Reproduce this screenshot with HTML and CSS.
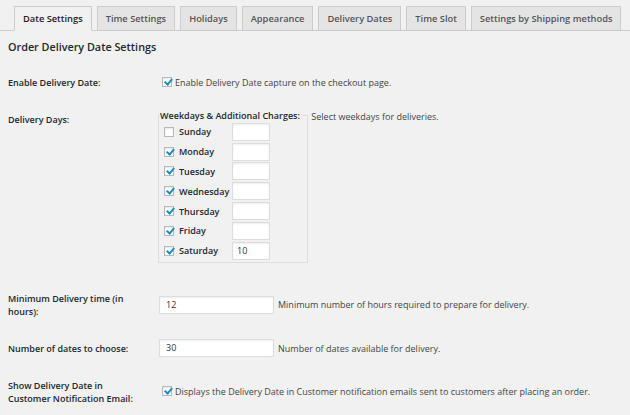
FILE: index.html
```html
<!DOCTYPE html>
<html lang="en">
<head>
  <meta charset="UTF-8" />
  <title>Order Delivery Date Settings</title>
  <link rel="stylesheet" href="styles.css">
</head>
<body>
  <nav class="nav-tab-wrapper">
    <a class="nav-tab nav-tab-active">Date Settings</a>
    <a class="nav-tab">Time Settings</a>
    <a class="nav-tab">Holidays</a>
    <a class="nav-tab">Appearance</a>
    <a class="nav-tab">Delivery Dates</a>
    <a class="nav-tab">Time Slot</a>
    <a class="nav-tab">Settings by Shipping methods</a>
  </nav>

  <h3 class="section-title">Order Delivery Date Settings</h3>

  <table class="form-table">
    <tr>
      <th>Enable Delivery Date:</th>
      <td><label class="check-label"><span class="check on"></span>Enable Delivery Date capture on the checkout page.</label></td>
    </tr>
    <tr class="days-row">
      <th>Delivery Days:</th>
      <td>
        <fieldset class="days">
          <legend>Weekdays &amp; Additional Charges:</legend>
          <div class="day"><span class="check"></span><span class="day-name">Sunday</span><span class="small-input"></span></div>
          <div class="day"><span class="check on"></span><span class="day-name">Monday</span><span class="small-input"></span></div>
          <div class="day"><span class="check on"></span><span class="day-name">Tuesday</span><span class="small-input"></span></div>
          <div class="day"><span class="check on"></span><span class="day-name">Wednesday</span><span class="small-input"></span></div>
          <div class="day"><span class="check on"></span><span class="day-name">Thursday</span><span class="small-input"></span></div>
          <div class="day"><span class="check on"></span><span class="day-name">Friday</span><span class="small-input"></span></div>
          <div class="day"><span class="check on"></span><span class="day-name">Saturday</span><span class="small-input">10</span></div>
        </fieldset>
        <span class="description">Select weekdays for deliveries.</span>
      </td>
    </tr>
    <tr>
      <th>Minimum Delivery time (in hours):</th>
      <td><span class="text-input">12</span><span class="description">Minimum number of hours required to prepare for delivery.</span></td>
    </tr>
    <tr>
      <th>Number of dates to choose:</th>
      <td><span class="text-input">30</span><span class="description">Number of dates available for delivery.</span></td>
    </tr>
    <tr>
      <th>Show Delivery Date in Customer Notification Email:</th>
      <td><label class="check-label"><span class="check on"></span>Displays the Delivery Date in Customer notification emails sent to customers after placing an order.</label></td>
    </tr>
  </table>
</body>
</html>
```

FILE: styles.css
```css
body {
  margin: 0;
  background: #f1f1f1;
  color: #444;
  font-family: "Open Sans", sans-serif;
  font-size: 9px;
  line-height: 13px;
}

.nav-tab-wrapper {
  display: flex;
  gap: 5px;
  padding: 6px 0 0 14px;
  border-bottom: 1px solid #ccc;
}

.nav-tab {
  display: block;
  height: 23px;
  line-height: 23px;
  padding: 0 8px;
  margin-bottom: -1px;
  border: 1px solid #ccc;
  background: #e4e4e4;
  color: #555;
  font-weight: 600;
  font-size: 9.3px;
}

.nav-tab-active {
  background: #f1f1f1;
  border-bottom-color: #f1f1f1;
  color: #222;
}

.section-title {
  margin: 9px 0 0 8px;
  font-size: 10.8px;
  font-weight: 600;
  color: #23282d;
  line-height: 14px;
}

.form-table {
  border-collapse: collapse;
  margin-top: 10px;
}

.form-table th {
  width: 130px;
  padding: 12px 21px 12px 8px;
  text-align: left;
  vertical-align: top;
  font-weight: 600;
  color: #23282d;
}

.form-table td {
  padding: 9px 0;
  vertical-align: middle;
}

.check {
  display: inline-block;
  flex: none;
  box-sizing: border-box;
  width: 10px;
  height: 10px;
  border: 1px solid #b4b9be;
  background: #fff;
  vertical-align: middle;
  position: relative;
  box-shadow: inset 0 1px 2px rgba(0, 0, 0, 0.1);
}

.check.on::after {
  content: "";
  position: absolute;
  left: 3px;
  top: -1px;
  width: 2.5px;
  height: 6px;
  border: solid #1e8cbe;
  border-width: 0 2px 2px 0;
  transform: rotate(40deg);
}

.check-label .check {
  margin: -3px 3px 0 3px;
}

.days-row td {
  vertical-align: top;
  padding-top: 8px;
  padding-bottom: 17px;
}

.days {
  display: inline-block;
  vertical-align: top;
  box-sizing: border-box;
  width: 150px;
  margin: 0 0 0 -1px;
  padding: 0 0 1px 5px;
  border: 1px solid #ddd;
}

.days legend {
  padding: 0 3px 0 0;
  margin-left: -4px;
  font-weight: 600;
  color: #23282d;
}

.day {
  display: flex;
  align-items: center;
  height: 19.8px;
}

.day .check {
  margin-right: 5px;
}

.day-name {
  width: 53px;
  font-weight: 600;
  color: #23282d;
}

.small-input,
.text-input {
  display: inline-block;
  box-sizing: border-box;
  background: #fff;
  border: 1px solid #ddd;
  box-shadow: inset 0 1px 2px rgba(0, 0, 0, 0.07);
  color: #333;
  height: 18px;
  line-height: 16px;
}

.small-input {
  width: 38px;
  padding-left: 4px;
}

.text-input {
  width: 115px;
  vertical-align: middle;
  padding-left: 6px;
}

.description {
  margin-left: 4px;
  vertical-align: middle;
}

.days-row .description {
  margin-left: 1px;
  vertical-align: top;
  line-height: 16px;
}
```
